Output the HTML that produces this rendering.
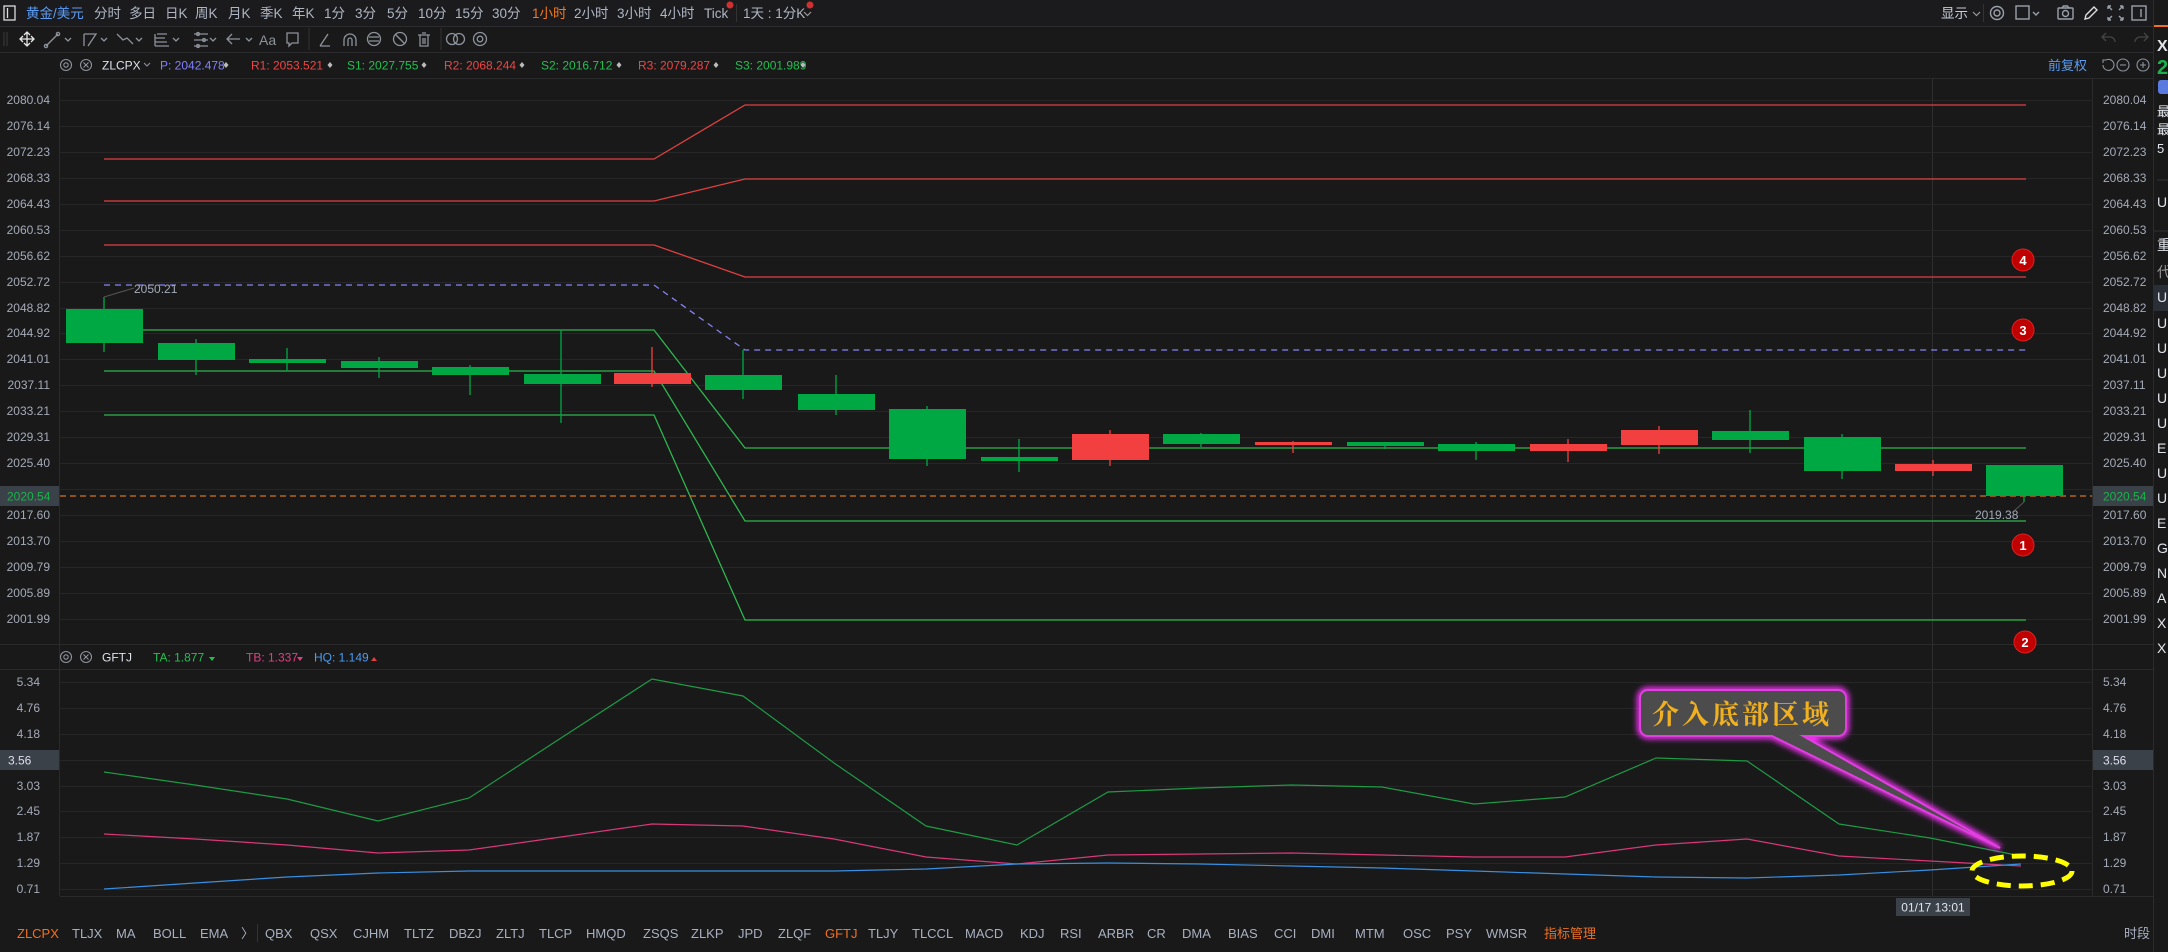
<!DOCTYPE html>
<html><head><meta charset="utf-8">
<style>
html,body{margin:0;padding:0;background:#19191a;width:2168px;height:952px;overflow:hidden;}
svg{position:absolute;left:0;top:0;}
text{font-family:"Liberation Sans","Noto Sans CJK SC",sans-serif;}
</style></head><body>
<svg width="2168" height="952" viewBox="0 0 2168 952" xmlns="http://www.w3.org/2000/svg">
<defs>
<filter id="glow" x="-20%" y="-20%" width="140%" height="140%"><feGaussianBlur stdDeviation="3"/></filter>
</defs>
<!-- backgrounds -->
<rect x="0" y="0" width="2168" height="952" fill="#19191a"/>
<rect x="0" y="0" width="2153" height="26" fill="#1b1b1d"/>
<line x1="0" y1="26.5" x2="2153" y2="26.5" stroke="#2c2c2e"/>
<line x1="0" y1="52.5" x2="2153" y2="52.5" stroke="#2c2c2e"/>
<line x1="2153.5" y1="0" x2="2153.5" y2="952" stroke="#2c2c2e"/>
<line x1="2154" y1="26" x2="2168" y2="26" stroke="#f07020" stroke-width="2"/>
<line x1="1983.5" y1="4" x2="1983.5" y2="22" stroke="#333"/>
<line x1="736.5" y1="4" x2="736.5" y2="22" stroke="#333"/>

<!-- toolbar row 1 -->
<rect x="4" y="6" width="11" height="14" fill="none" stroke="#ddd" stroke-width="1.3"/>
<line x1="7.5" y1="8" x2="7.5" y2="18" stroke="#ddd" stroke-width="1.3"/>
<g font-size="13.5" fill="#aeb6c4">
<text x="26" y="18" fill="#5b9cf2">黄金/美元</text>
<text x="94" y="18">分时</text><text x="129" y="18">多日</text><text x="165" y="18">日K</text>
<text x="195" y="18">周K</text><text x="228" y="18">月K</text><text x="260" y="18">季K</text>
<text x="292" y="18">年K</text><text x="324" y="18">1分</text><text x="355" y="18">3分</text>
<text x="387" y="18">5分</text><text x="418" y="18">10分</text><text x="455" y="18">15分</text>
<text x="492" y="18">30分</text><text x="532" y="18" fill="#f07820">1小时</text>
<text x="574" y="18">2小时</text><text x="617" y="18">3小时</text><text x="660" y="18">4小时</text>
<text x="704" y="18">Tick</text><text x="743" y="18">1天 : 1分K</text>
<text x="1941" y="18" fill="#c4ccd8">显示</text>
</g>
<circle cx="730" cy="5" r="3.5" fill="#d03030"/><circle cx="810" cy="5" r="3.5" fill="#d03030"/>
<path d="M804 12 l3.5 3.5 l3.5 -3.5" fill="none" stroke="#999" stroke-width="1.2"/>
<path d="M1973 12 l3.5 3.5 l3.5 -3.5" fill="none" stroke="#999" stroke-width="1.2"/>
<!-- right toolbar icons -->
<g fill="none" stroke="#9aa0aa" stroke-width="1.4">
<circle cx="1997" cy="13" r="6.5"/><circle cx="1997" cy="13" r="3"/>
<rect x="2016" y="6" width="13" height="13"/><path d="M2033 12 l3 3 l3 -3"/>
<rect x="2058" y="8" width="15" height="11" rx="1"/><circle cx="2065.5" cy="13.5" r="3"/><path d="M2062 8 l1.5 -2 h4 l1.5 2"/>
<path d="M2085 19 l1 -4 l8 -8 l3 3 l-8 8 z" stroke="#ddd"/>
<path d="M2108 6 h3 M2108 6 v3 M2123 6 h-3 M2123 6 v3 M2108 20 h3 M2108 20 v-3 M2123 20 h-3 M2123 20 v-3 M2108 6 l4 4 M2123 6 l-4 4 M2108 20 l4 -4 M2123 20 l-4 -4"/>
<rect x="2132" y="6" width="14" height="14"/><line x1="2141" y1="9" x2="2141" y2="17"/>
</g>

<!-- toolbar row 2 -->
<g fill="none" stroke="#8d939c" stroke-width="1.3">
<path d="M4 32 v14 M7 32 v14" stroke="#333"/>
<path d="M27 32 v14 M20 39 h14 M24 35 l3 -3 l3 3 M24 43 l3 3 l3 -3 M23 36 l-3 3 l3 3 M31 36 l3 3 l-3 3" stroke="#e8e8e8"/>
<path d="M46 46 l12 -12"/><circle cx="46" cy="46" r="1.6"/><circle cx="58" cy="34" r="1.6"/><path d="M65 38 l3 3 l3 -3"/>
<path d="M84 34 v12 M84 34 l12 0 l-8 12"/><path d="M101 38 l3 3 l3 -3"/>
<path d="M117 34 l6 6 l4 -2 l6 6"/><path d="M136 38 l3 3 l3 -3"/>
<path d="M155 46 h14 M155 42 h12 M155 38 h10 M157 34 h10 M155 34 v12"/><path d="M173 38 l3 3 l3 -3"/>
<path d="M194 34 h14 M194 40 h14 M194 46 h14"/><circle cx="198" cy="34" r="1.5"/><circle cx="204" cy="40" r="1.5"/><circle cx="198" cy="46" r="1.5"/><path d="M210 38 l3 3 l3 -3"/>
<path d="M240 39 h-13 M232 34 l-5 5 l5 5"/><path d="M246 38 l3 3 l3 -3"/>
<path d="M287 33 h11 v10 h-6 l-3 3 v-3 h-2 z"/>
<path d="M311 309" /><path d="M309 28 v22" stroke="#2e2e2e"/>
<path d="M320 46 l8 -12 M320 46 h10"/>
<path d="M344 46 v-6 a6 6 0 0 1 12 0 v6 M348 46 v-6 a2 2 0 0 1 4 0 v6"/>
<path d="M369 37 h10 M369 41 h10"/><circle cx="374" cy="39" r="6.5"/>
<circle cx="400" cy="39" r="6.5"/><path d="M395 34 l10 10"/>
<path d="M418 35 h12 M420 35 v11 h8 v-11 M422 33 h4 M423 38 v6 M425 38 v6"/>
<path d="M441 28 v22" stroke="#2e2e2e"/>
<circle cx="452" cy="39" r="5.5"/><circle cx="459" cy="39" r="5.5"/>
<circle cx="480" cy="39" r="6.5"/><circle cx="480" cy="39" r="2.8"/>
<path d="M2106 41 l-4 -4 l4 -4 M2102 37 h8 a5 5 0 0 1 5 5" stroke="#444"/>
<path d="M2144 41 l4 -4 l-4 -4 M2148 37 h-8 a5 5 0 0 0 -5 5" stroke="#444"/>
</g>
<text x="259" y="45" font-size="14" fill="#8d939c">Aa</text>

<!-- legend row main -->
<g fill="none" stroke="#8d939c" stroke-width="1.1">
<circle cx="66" cy="65" r="5.5"/><circle cx="66" cy="65" r="2.2"/>
<circle cx="86" cy="65" r="5.5"/><path d="M83.5 62.5 l5 5 M88.5 62.5 l-5 5"/>
<path d="M144 63 l3 3 l3 -3"/>
<path d="M2106 60 a5.5 5.5 0 1 1 -3 5 M2106 60 h-3 v3"/>
<circle cx="2123" cy="65" r="6"/><path d="M2120 65 h6"/>
<circle cx="2143" cy="65" r="6"/><path d="M2140 65 h6 M2143 62 v6"/>
</g>
<g font-size="12">
<text x="102" y="69.5" fill="#dde2ea">ZLCPX</text>
<text x="160" y="69.5" fill="#8080ff">P:  2042.478</text>
<text x="251" y="69.5" fill="#f04444">R1:  2053.521</text>
<text x="347" y="69.5" fill="#22c050">S1:  2027.755</text>
<text x="444" y="69.5" fill="#f04444">R2:  2068.244</text>
<text x="541" y="69.5" fill="#22c050">S2:  2016.712</text>
<text x="638" y="69.5" fill="#f04444">R3:  2079.287</text>
<text x="735" y="69.5" fill="#22c050">S3:  2001.989</text>
<text x="2048" y="70" font-size="13" fill="#5b9cf2">前复权</text>
</g>
<g fill="#bbb">
<path d="M226 62 l2.5 3 l-2.5 3 l-2.5 -3z"/><path d="M330 62 l2.5 3 l-2.5 3 l-2.5 -3z"/>
<path d="M424 62 l2.5 3 l-2.5 3 l-2.5 -3z"/><path d="M522 62 l2.5 3 l-2.5 3 l-2.5 -3z"/>
<path d="M619 62 l2.5 3 l-2.5 3 l-2.5 -3z"/><path d="M716 62 l2.5 3 l-2.5 3 l-2.5 -3z"/>
<path d="M803 62 l2.5 3 l-2.5 3 l-2.5 -3z"/>
</g>

<!-- main plot frame -->
<g stroke="#2a2a2a" stroke-width="1">
<line x1="59.5" y1="78" x2="59.5" y2="896"/>
<line x1="2092.5" y1="78" x2="2092.5" y2="896"/>
<line x1="60" y1="78.5" x2="2153" y2="78.5"/>
<line x1="0" y1="644.5" x2="2153" y2="644.5"/>
<line x1="0" y1="669.5" x2="2153" y2="669.5"/>
<line x1="60" y1="896.5" x2="2153" y2="896.5"/>
<line x1="1932.5" y1="78" x2="1932.5" y2="896" stroke="#2e2e2e"/>
</g>
<g stroke="#262626">
<line x1="60" y1="100.5" x2="2092" y2="100.5"/><line x1="60" y1="126.5" x2="2092" y2="126.5"/>
<line x1="60" y1="152.5" x2="2092" y2="152.5"/><line x1="60" y1="178.5" x2="2092" y2="178.5"/>
<line x1="60" y1="204.5" x2="2092" y2="204.5"/><line x1="60" y1="230.5" x2="2092" y2="230.5"/>
<line x1="60" y1="256.5" x2="2092" y2="256.5"/><line x1="60" y1="282.5" x2="2092" y2="282.5"/>
<line x1="60" y1="308.5" x2="2092" y2="308.5"/><line x1="60" y1="333.5" x2="2092" y2="333.5"/>
<line x1="60" y1="359.5" x2="2092" y2="359.5"/><line x1="60" y1="385.5" x2="2092" y2="385.5"/>
<line x1="60" y1="411.5" x2="2092" y2="411.5"/><line x1="60" y1="437.5" x2="2092" y2="437.5"/>
<line x1="60" y1="463.5" x2="2092" y2="463.5"/><line x1="60" y1="489.5" x2="2092" y2="489.5"/>
<line x1="60" y1="515.5" x2="2092" y2="515.5"/><line x1="60" y1="541.5" x2="2092" y2="541.5"/>
<line x1="60" y1="567.5" x2="2092" y2="567.5"/><line x1="60" y1="593.5" x2="2092" y2="593.5"/>
<line x1="60" y1="619.5" x2="2092" y2="619.5"/>
<line x1="60" y1="682.5" x2="2092" y2="682.5"/><line x1="60" y1="708.5" x2="2092" y2="708.5"/>
<line x1="60" y1="734.5" x2="2092" y2="734.5"/><line x1="60" y1="760.5" x2="2092" y2="760.5"/>
<line x1="60" y1="786.5" x2="2092" y2="786.5"/><line x1="60" y1="811.5" x2="2092" y2="811.5"/>
<line x1="60" y1="837.5" x2="2092" y2="837.5"/><line x1="60" y1="863.5" x2="2092" y2="863.5"/>
<line x1="60" y1="889.5" x2="2092" y2="889.5"/>
</g>

<!-- axis labels -->
<g font-size="12" fill="#a4abb8">
<g text-anchor="end">
<text x="50" y="104">2080.04</text><text x="50" y="130">2076.14</text><text x="50" y="156">2072.23</text>
<text x="50" y="182">2068.33</text><text x="50" y="208">2064.43</text><text x="50" y="234">2060.53</text>
<text x="50" y="260">2056.62</text><text x="50" y="286">2052.72</text><text x="50" y="312">2048.82</text>
<text x="50" y="337">2044.92</text><text x="50" y="363">2041.01</text><text x="50" y="389">2037.11</text>
<text x="50" y="415">2033.21</text><text x="50" y="441">2029.31</text><text x="50" y="467">2025.40</text>
<text x="50" y="519">2017.60</text><text x="50" y="545">2013.70</text><text x="50" y="571">2009.79</text>
<text x="50" y="597">2005.89</text><text x="50" y="623">2001.99</text>
<text x="40" y="686">5.34</text><text x="40" y="712">4.76</text><text x="40" y="738">4.18</text>
<text x="40" y="790">3.03</text><text x="40" y="815">2.45</text><text x="40" y="841">1.87</text>
<text x="40" y="867">1.29</text><text x="40" y="893">0.71</text>
</g>
<text x="2103" y="104">2080.04</text><text x="2103" y="130">2076.14</text><text x="2103" y="156">2072.23</text>
<text x="2103" y="182">2068.33</text><text x="2103" y="208">2064.43</text><text x="2103" y="234">2060.53</text>
<text x="2103" y="260">2056.62</text><text x="2103" y="286">2052.72</text><text x="2103" y="312">2048.82</text>
<text x="2103" y="337">2044.92</text><text x="2103" y="363">2041.01</text><text x="2103" y="389">2037.11</text>
<text x="2103" y="415">2033.21</text><text x="2103" y="441">2029.31</text><text x="2103" y="467">2025.40</text>
<text x="2103" y="519">2017.60</text><text x="2103" y="545">2013.70</text><text x="2103" y="571">2009.79</text>
<text x="2103" y="597">2005.89</text><text x="2103" y="623">2001.99</text>
<text x="2103" y="686">5.34</text><text x="2103" y="712">4.76</text><text x="2103" y="738">4.18</text>
<text x="2103" y="790">3.03</text><text x="2103" y="815">2.45</text><text x="2103" y="841">1.87</text>
<text x="2103" y="867">1.29</text><text x="2103" y="893">0.71</text>
</g>
<rect x="0" y="486" width="59" height="20" fill="#3b4149"/>
<text x="7" y="500.5" font-size="12" fill="#19b34a">2020.54</text>
<rect x="2093" y="486" width="60" height="20" fill="#3b4149"/>
<text x="2103" y="500.5" font-size="12" fill="#19b34a">2020.54</text>
<rect x="0" y="750" width="59" height="20" fill="#3b4149"/>
<text x="8" y="764.5" font-size="12" fill="#dde">3.56</text>
<rect x="2093" y="750" width="60" height="20" fill="#3b4149"/>
<text x="2103" y="764.5" font-size="12" fill="#dde">3.56</text>

<!-- pivot lines -->
<g fill="none" stroke-width="1.3">
<polyline points="104,159 654,159 745,105 2026,105" stroke="#e04040"/>
<polyline points="104,201 654,201 745,179 2026,179" stroke="#e04040"/>
<polyline points="104,245 654,245 745,277 2026,277" stroke="#e04040"/>
<polyline points="104,285 654,285 745,350 2026,350" stroke="#8484f4" stroke-dasharray="6,5"/>
<polyline points="104,330 654,330 745,448 2026,448" stroke="#2fb64e"/>
<polyline points="104,371 654,371 745,521 2026,521" stroke="#2fb64e"/>
<polyline points="104,415 654,415 745,620 2026,620" stroke="#2fb64e"/>
<line x1="60" y1="496" x2="2092" y2="496" stroke="#d5731f" stroke-dasharray="6,4"/>
</g>

<!-- candles -->
<g stroke-width="1.3">
<g fill="#00a843" stroke="#00a843">
<line x1="104" y1="297" x2="104" y2="352"/><rect x="66" y="309" width="77" height="34" stroke="none"/>
<line x1="196" y1="339" x2="196" y2="375"/><rect x="158" y="343" width="77" height="17" stroke="none"/>
<line x1="287" y1="348" x2="287" y2="371"/><rect x="249" y="359" width="77" height="4" stroke="none"/>
<line x1="379" y1="357" x2="379" y2="378"/><rect x="341" y="361" width="77" height="7" stroke="none"/>
<line x1="470" y1="365" x2="470" y2="395"/><rect x="432" y="367" width="77" height="8" stroke="none"/>
<line x1="561" y1="330" x2="561" y2="423"/><rect x="524" y="374" width="77" height="10" stroke="none"/>
<line x1="743" y1="350" x2="743" y2="399"/><rect x="705" y="375" width="77" height="15" stroke="none"/>
<line x1="836" y1="375" x2="836" y2="415"/><rect x="798" y="394" width="77" height="16" stroke="none"/>
<line x1="927" y1="406" x2="927" y2="466"/><rect x="889" y="409" width="77" height="50" stroke="none"/>
<line x1="1019" y1="439" x2="1019" y2="472"/><rect x="981" y="457" width="77" height="4" stroke="none"/>
<line x1="1201" y1="433" x2="1201" y2="447"/><rect x="1163" y="434" width="77" height="10" stroke="none"/>
<line x1="1385" y1="442" x2="1385" y2="449"/><rect x="1347" y="442" width="77" height="4" stroke="none"/>
<line x1="1476" y1="442" x2="1476" y2="460"/><rect x="1438" y="444" width="77" height="7" stroke="none"/>
<line x1="1750" y1="410" x2="1750" y2="453"/><rect x="1712" y="431" width="77" height="9" stroke="none"/>
<line x1="1842" y1="434" x2="1842" y2="479"/><rect x="1804" y="437" width="77" height="34" stroke="none"/>
<line x1="2024" y1="465" x2="2024" y2="502"/><rect x="1986" y="465" width="77" height="31" stroke="none"/>
</g>
<g fill="#f24040" stroke="#f24040">
<line x1="652" y1="347" x2="652" y2="387"/><rect x="614" y="373" width="77" height="11" stroke="none"/>
<line x1="1110" y1="430" x2="1110" y2="466"/><rect x="1072" y="434" width="77" height="26" stroke="none"/>
<line x1="1293" y1="441" x2="1293" y2="453"/><rect x="1255" y="442" width="77" height="3" stroke="none"/>
<line x1="1568" y1="439" x2="1568" y2="462"/><rect x="1530" y="444" width="77" height="7" stroke="none"/>
<line x1="1659" y1="426" x2="1659" y2="454"/><rect x="1621" y="430" width="77" height="15" stroke="none"/>
<line x1="1933" y1="460" x2="1933" y2="476"/><rect x="1895" y="464" width="77" height="7" stroke="none"/>
</g>
</g>
<path d="M104 297 l30 -9" stroke="#555" fill="none"/>
<text x="134" y="293" font-size="12" fill="#a4abb8">2050.21</text>
<path d="M2024 502 l-10 9" stroke="#555" fill="none"/>
<text x="1975" y="519" font-size="12" fill="#a4abb8">2019.38</text>

<!-- numbered markers -->
<g font-size="13" font-weight="bold" fill="#fff" text-anchor="middle">
<circle cx="2023" cy="260" r="11" fill="#c00000" stroke="#e02020"/><text x="2023" y="265">4</text>
<circle cx="2023" cy="330" r="11" fill="#c00000" stroke="#e02020"/><text x="2023" y="335">3</text>
<circle cx="2023" cy="545" r="11" fill="#c00000" stroke="#e02020"/><text x="2023" y="550">1</text>
<circle cx="2025" cy="642" r="11" fill="#c00000" stroke="#e02020"/><text x="2025" y="647">2</text>
</g>

<!-- lower legend -->
<g fill="none" stroke="#8d939c" stroke-width="1.1">
<circle cx="66" cy="657" r="5.5"/><circle cx="66" cy="657" r="2.2"/>
<circle cx="86" cy="657" r="5.5"/><path d="M83.5 654.5 l5 5 M88.5 654.5 l-5 5"/>
</g>
<g font-size="12">
<text x="102" y="661.5" fill="#dde2ea">GFTJ</text>
<text x="153" y="661.5" fill="#22c050">TA:  1.877</text>
<text x="246" y="661.5" fill="#e04080">TB:  1.337</text>
<text x="314" y="661.5" fill="#4a9cf0">HQ:  1.149</text>
</g>
<path d="M209 657 l3 4 l3 -4z" fill="#22c050"/>
<path d="M297 657 l3 4 l3 -4z" fill="#e04080"/>
<path d="M371 661 l3 -4 l3 4z" fill="#e04040"/>

<!-- lower lines -->
<g fill="none" stroke-width="1.2">
<polyline stroke="#1f9a45" points="104,772 195,785 287,799 378,821 469,798 561,738 652,679 743,696 834,763 926,826 1017,845 1108,792 1200,788 1291,785 1382,787 1474,804 1565,797 1656,758 1747,761 1839,824 1930,838 2021,856"/>
<polyline stroke="#d83878" points="104,834 195,839 287,845 378,853 469,850 561,837 652,824 743,826 834,839 926,857 1017,864 1108,855 1200,854 1291,853 1382,855 1474,857 1565,857 1656,845 1747,839 1839,856 1930,861 2021,866"/>
<polyline stroke="#3a8ee0" points="104,889 195,883 287,877 378,873 469,871 561,871 652,871 743,871 834,871 926,869 1017,864 1108,863 1200,864 1291,866 1382,868 1474,871 1565,874 1656,877 1747,878 1839,875 1930,870 2021,864"/>
</g>

<!-- callout -->
<g>
<path d="M1648 690 h190 a8 8 0 0 1 8 8 v30 a8 8 0 0 1 -8 8 h-35 l197 112 l-228 -112 h-124 a8 8 0 0 1 -8 -8 v-30 a8 8 0 0 1 8 -8z" fill="none" stroke="#ff30ff" stroke-width="6" filter="url(#glow)"/>
<path d="M1648 690 h190 a8 8 0 0 1 8 8 v30 a8 8 0 0 1 -8 8 h-35 l197 112 l-228 -112 h-124 a8 8 0 0 1 -8 -8 v-30 a8 8 0 0 1 8 -8z" fill="#4c4c4c" stroke="#e040e0" stroke-width="2"/>
<text x="1742" y="724" font-size="27" font-weight="bold" fill="#f0b020" text-anchor="middle" letter-spacing="3" style="font-family:'Noto Serif CJK SC','Liberation Serif',serif">介入底部区域</text>
</g>
<ellipse cx="2022" cy="871" rx="50" ry="15" fill="none" stroke="#ffff00" stroke-width="5" stroke-dasharray="14,8"/>

<!-- time label -->
<rect x="1896" y="898" width="74" height="18" fill="#3b4149"/>
<text x="1933" y="911.5" font-size="12" fill="#e0e4ea" text-anchor="middle">01/17 13:01</text>

<!-- bottom tabs -->
<line x1="257.5" y1="924" x2="257.5" y2="942" stroke="#333"/>
<g font-size="13" fill="#a8b0c0">
<text x="17" y="938" fill="#f07020">ZLCPX</text><text x="72" y="938">TLJX</text><text x="116" y="938">MA</text>
<text x="153" y="938">BOLL</text><text x="200" y="938">EMA</text><text x="241" y="938">〉</text>
<text x="265" y="938">QBX</text><text x="310" y="938">QSX</text><text x="353" y="938">CJHM</text>
<text x="404" y="938">TLTZ</text><text x="449" y="938">DBZJ</text><text x="496" y="938">ZLTJ</text>
<text x="539" y="938">TLCP</text><text x="586" y="938">HMQD</text><text x="643" y="938">ZSQS</text>
<text x="691" y="938">ZLKP</text><text x="738" y="938">JPD</text><text x="778" y="938">ZLQF</text>
<text x="825" y="938" fill="#f07020">GFTJ</text><text x="868" y="938">TLJY</text><text x="912" y="938">TLCCL</text>
<text x="965" y="938">MACD</text><text x="1020" y="938">KDJ</text><text x="1060" y="938">RSI</text>
<text x="1098" y="938">ARBR</text><text x="1147" y="938">CR</text><text x="1182" y="938">DMA</text>
<text x="1228" y="938">BIAS</text><text x="1274" y="938">CCI</text><text x="1311" y="938">DMI</text>
<text x="1355" y="938">MTM</text><text x="1403" y="938">OSC</text><text x="1446" y="938">PSY</text>
<text x="1486" y="938">WMSR</text><text x="1544" y="938" fill="#f07020">指标管理</text>
<text x="2124" y="938">时段</text>
</g>

<!-- right side panel (clipped) -->
<g font-size="14" fill="#e0e4ea">
<text x="2157" y="51" font-weight="bold" font-size="16">X</text>
<text x="2157" y="74" font-weight="bold" font-size="20" fill="#19b34a">2</text>
<rect x="2158" y="80" width="12" height="14" rx="3" fill="#5a7ae0"/>
<text x="2157" y="116" font-size="13">最</text><text x="2157" y="134" font-size="13">最</text><text x="2157" y="153" font-size="13">5</text>
<line x1="2157" y1="180" x2="2168" y2="180" stroke="#333"/>
<text x="2157" y="207">U</text>
<rect x="2154" y="230" width="14" height="2" fill="#252528"/>
<text x="2157" y="250">重</text><text x="2157" y="277" fill="#999">代</text>
<rect x="2154" y="285" width="14" height="26" fill="#2a2e36"/>
<text x="2157" y="302">U</text><text x="2157" y="328">U</text><text x="2157" y="353">U</text>
<text x="2157" y="378">U</text><text x="2157" y="403">U</text><text x="2157" y="428">U</text>
<text x="2157" y="453">E</text><text x="2157" y="478">U</text><text x="2157" y="503">U</text>
<text x="2157" y="528">E</text><text x="2157" y="553">G</text><text x="2157" y="578">N</text>
<text x="2157" y="603">A</text><text x="2157" y="628">X</text><text x="2157" y="653">X</text>
</g>
</svg>
</body></html>
